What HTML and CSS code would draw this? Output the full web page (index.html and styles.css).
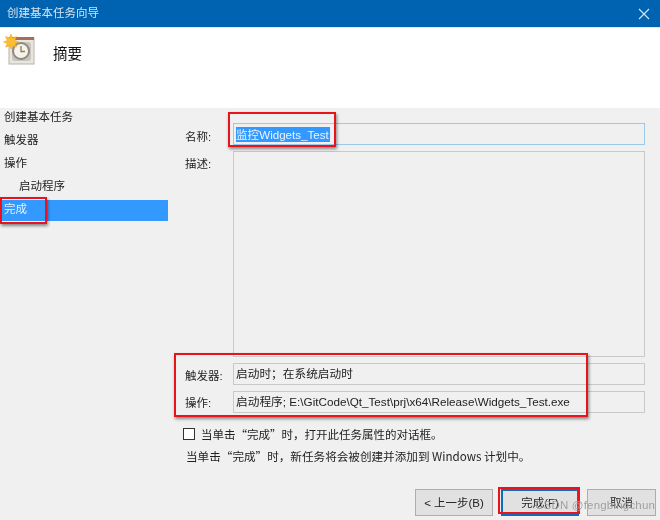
FILE: index.html
```html
<!DOCTYPE html>
<html lang="zh-CN">
<head>
<meta charset="utf-8">
<title>创建基本任务向导</title>
<link rel="stylesheet" href="styles.css">
</head>
<body>
<div class="dialog">
  <header class="titlebar">
    <span class="title">创建基本任务向导</span>
    <svg class="close" width="14" height="14" viewBox="0 0 14 14"><path d="M2 2L12 12M12 2L2 12" stroke="#cfe3f3" stroke-width="1.2" fill="none"/></svg>
  </header>
  <section class="banner">
    <svg class="task-icon" width="32" height="32" viewBox="0 0 32 32">
      <rect x="5" y="4" width="25" height="26" fill="#e9e6df" stroke="#b9b4aa"/>
      <rect x="5" y="3" width="25" height="3" fill="#a5705a"/>
      <rect x="8" y="8" width="19" height="19" rx="3" fill="#c9c5bc"/>
      <circle cx="17" cy="17" r="8" fill="#f5f3ee" stroke="#8e8a82" stroke-width="2"/>
      <path d="M17 12V17.5H21" stroke="#9a7a45" stroke-width="1.3" fill="none"/>
      <path d="M7 0L8.5 4L12.5 2.5L10.8 6.5L14.5 8L10.8 9.5L12.5 13L8.5 11.8L7 15L5.5 11.8L1.5 13L3.2 9.5L-0.5 8L3.2 6.5L1.5 2.5L5.5 4Z" fill="#f9c02c" stroke="#f59a20" stroke-width=".5"/>
    </svg>
    <h1 class="banner-title">摘要</h1>
  </section>
  <div class="content">
    <nav class="steps">
      <div class="step">创建基本任务</div>
      <div class="step">触发器</div>
      <div class="step">操作</div>
      <div class="step sub">启动程序</div>
      <div class="step current">完成</div>
    </nav>
    <main class="form">
      <div class="row row-name">
        <label class="label label-name">名称:</label>
        <div class="field field-name"><span class="selected">监控Widgets_Test</span></div>
      </div>
      <div class="row row-desc">
        <label class="label">描述:</label>
        <div class="field field-desc"></div>
      </div>
      <div class="row row-info">
        <label class="label label-trigger">触发器:</label>
        <div class="field field-info">启动时；在系统启动时</div>
      </div>
      <div class="row row-info">
        <label class="label label-action">操作:</label>
        <div class="field field-info">启动程序; E:\GitCode\Qt_Test\prj\x64\Release\Widgets_Test.exe</div>
      </div>
      <div class="check-row"><span class="checkbox"></span><span>当单击“完成”时，打开此任务属性的对话框。</span></div>
      <p class="note">当单击“完成”时，新任务将会被创建并添加到 Windows 计划中。</p>
      <div class="buttons">
        <button class="btn btn-back">&lt; 上一步(B)</button>
        <button class="btn btn-finish">完成(F)</button>
        <button class="btn btn-cancel">取消</button>
      </div>
    </main>
  </div>
  <div class="mark mark-name"></div>
  <div class="mark mark-done"></div>
  <div class="mark mark-info"></div>
  <div class="mark mark-finish"></div>
  <div class="watermark">CSDN @fengbingchun</div>
</div>
</body>
</html>
```
FILE: styles.css
```css
* { box-sizing: border-box; }
html, body { margin: 0; padding: 0; }
body { width: 660px; height: 520px; overflow: hidden; font-family: "Liberation Sans", "Noto Sans CJK SC", sans-serif; font-size: 11.5px; color: #222; }
.dialog { position: relative; width: 660px; height: 520px; background: #f0f0f0; display: flex; flex-direction: column; filter: blur(0.35px); }
.titlebar { height: 28px; flex: none; background: #0063b1; color: #d4e4f2; display: flex; align-items: center; justify-content: space-between; padding: 0 9px 1px 7px; border-bottom: 1px solid #dfe9f2; }
.title { font-size: 11.5px; line-height: 16px; }
.close { display: block; margin-top: 1px; }
.banner { height: 80px; flex: none; background: #fff; display: flex; align-items: flex-start; padding: 6px 0 0 4px; }
.task-icon { flex: none; display: block; overflow: visible; }
.banner-title { margin: 10px 0 0 17px; font-size: 14.5px; font-weight: 400; line-height: 20px; color: #111; }
.content { flex: 1; display: flex; min-height: 0; }
.steps { width: 168px; flex: none; }
.step { height: 23px; padding: 0 0 0 4px; line-height: 19px; }
.step.sub { padding-left: 19px; }
.step.current { height: 21px; background: #3399ff; color: #e6f2ff; line-height: 18px; }
.form { flex: 1; padding: 15px 15px 0 17px; display: flex; flex-direction: column; min-width: 0; }
.row { display: flex; gap: 0; }
.label { width: 48px; flex: none; line-height: 20px; }
.label-name { padding-top: 4px; }
.label-trigger { padding-top: 3px; }
.label-action { padding-top: 2px; }
.field { flex: 1; min-width: 0; }
.row-name { height: 22px; }
.field-name { border: 1px solid #9cc8ea; padding: 0 0 0 2px; line-height: 20px; }
.selected { display: inline-block; height: 15px; line-height: 16px; background: #3399ff; color: #e8f3ff; border-right: 1px solid #b08040; vertical-align: top; margin-top: 3px; font-size: 11.6px; }
.row-desc { height: 206px; margin-top: 6px; }
.row-desc .label { padding-top: 3px; }
.field-desc { border: 1px solid #c9c9c9; }
.row-info { height: 22px; margin-top: 6px; }
.field-info { border: 1px solid #c9c9c9; padding: 0 0 0 2px; line-height: 20px; font-size: 11.7px; }
.check-row { display: flex; align-items: center; gap: 6px; margin: 14px 0 0 -2px; height: 14px; font-family: "Noto Sans CJK SC", sans-serif; }
.checkbox { width: 12px; height: 12px; flex: none; border: 1px solid #333; background: #fff; }
.note { margin: 6px 0 0 1px; line-height: 18px; font-family: "Noto Sans CJK SC", sans-serif; font-size: 11.6px; }
.buttons { display: flex; gap: 8px; margin: 24px 0 0 230px; width: 241px; }
.btn { height: 27px; margin: 0; padding: 0 0 1px; font: inherit; color: #222; background: #e1e1e1; border: 1px solid #adadad; flex: none; }
.btn-back { width: 78px; }
.btn-finish { width: 78px; border: 2px solid #0f6cbd; }
.btn-cancel { width: 69px; }
.mark { position: absolute; border: 2px solid #e8131b; box-shadow: 1px 2px 3px rgba(0,0,0,.45); pointer-events: none; }
.mark-name { left: 228px; top: 112px; width: 108px; height: 35px; }
.mark-done { left: 0; top: 197px; width: 47px; height: 27px; }
.mark-info { left: 174px; top: 353px; width: 414px; height: 64px; }
.mark-finish { left: 498px; top: 487px; width: 82px; height: 27px; box-shadow: none; }
.watermark { position: absolute; left: 535px; top: 498px; font-family: "Liberation Sans", sans-serif; font-size: 11.5px; letter-spacing: .2px; line-height: 15px; color: rgba(120,120,120,.7); text-shadow: 0 0 1px rgba(255,255,255,.7); white-space: nowrap; }
```
